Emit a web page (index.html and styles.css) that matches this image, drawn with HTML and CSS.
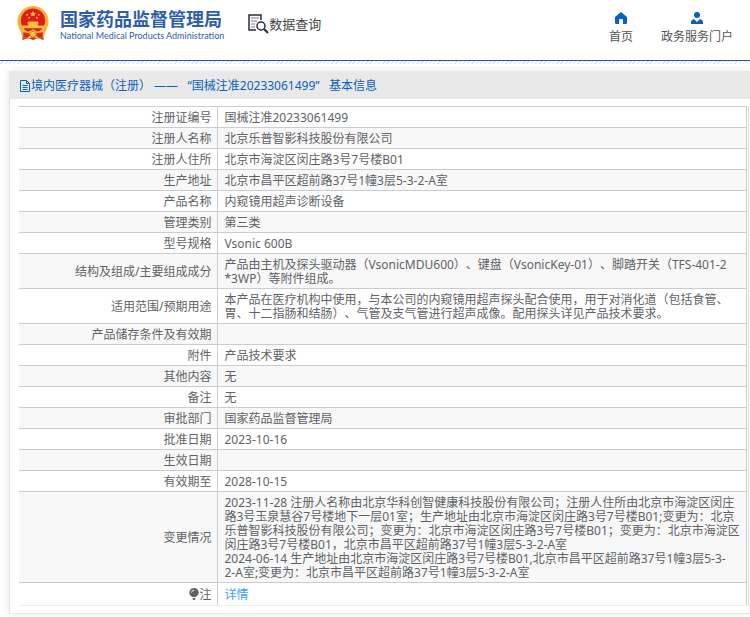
FILE: index.html
```html
<!DOCTYPE html>
<html lang="zh-CN">
<head>
    <meta charset="UTF-8">
    <meta name="viewport" content="width=device-width, initial-scale=1.0">
    <title>国家药品监督管理局 数据查询</title>
    <link rel="stylesheet" href="styles.css">
</head>
<body>

    <!-- header -->
    <header class="header">
        <a class="logo" href="#">
            <svg class="emblem" viewBox="0 0 34 36" aria-hidden="true">
                <path d="M7 26 L6 35 L12 33 L17 35 L22 33 L28 35 L27 26 Z" fill="#d8231f"/>
                <circle cx="17" cy="16" r="16" fill="#f0b93a"/>
                <circle cx="17" cy="16" r="14" fill="none" stroke="#e9a930" stroke-width="1" stroke-dasharray="2 1"/>
                <circle cx="17" cy="15" r="12.5" fill="#e01b1b"/>
                <path d="M17 5l.9 2.200h2.300l-1.900 1.400.8 2.300-2.100-1.400-2.100 1.400.8-2.300-1.900-1.400h2.300z" fill="#f8d548"/>
                <g fill="#f8c040">
                    <circle cx="11" cy="9" r="1"/><circle cx="13" cy="12" r="1"/>
                    <circle cx="21" cy="12" r="1"/><circle cx="23" cy="9" r="1"/>
                    <path d="M12 16h10l1 2h-1v2h6v3H6v-3h6v-2h-1z"/>
                </g>
                <path d="M3 23c3 3 7 4 10 3l4-2 4 2c3 1 7 0 10-3l-3 9-6 2-5-2-5 2-6-2z" fill="#efb836"/>
                <path d="M7 27l6 1 1 2-3 3-4-1zM27 27l-6 1-1 2 3 3 4-1z" fill="#d8231f"/>
                <circle cx="17" cy="29" r="3" fill="#f5cb45" stroke="#c88420" stroke-width="1"/>
            </svg>
            <span class="logo-text">
                <strong>国家药品监督管理局</strong>
                <span class="logo-en">National Medical Products Administration</span>
            </span>
        </a>
        <a class="query" href="#">
            <svg width="21" height="20" viewBox="0 0 21 20" fill="none" stroke="#2b2b42" aria-hidden="true">
                <path d="M13 6V1H1v15h7" stroke-width="1.500"/>
                <path d="M3 4h8M3 7h6M3 10h4M3 13h4" stroke="#77778a" stroke-width="1"/>
                <circle cx="13" cy="12" r="4" stroke-width="1.500"/>
                <path d="M16 15l4 4" stroke-width="2.200"/>
            </svg>
            <span>数据查询</span>
        </a>
        <nav class="nav">
            <a href="#">
                <svg width="12" height="12" viewBox="0 0 12 12" aria-hidden="true">
                    <path d="M6 0l6 5v6q0 1-1 1H8V8q0-1-1-1H5Q4 7 4 8v4H1q-1 0-1-1V5z" fill="#0a5fc4"/>
                </svg>
                <span>首页</span>
            </a>
            <a href="#">
                <svg width="12" height="12" viewBox="0 0 12 12" aria-hidden="true">
                    <circle cx="6" cy="3" r="3" fill="#0a5fc4"/>
                    <path d="M0 12v-2q0-2 3-3l3 3 3-3q3 1 3 3v2z" fill="#0a5fc4"/>
                </svg>
                <span>政务服务门户</span>
            </a>
        </nav>
    </header>
    <div class="stripe"></div>

    <!-- detail card -->
    <main class="card">
        <h1 class="card-title">
            <svg width="12" height="12" viewBox="0 0 12 12" fill="none" stroke="#0a5fc4" aria-hidden="true">
                <path d="M1.500.5h6l3 3v8h-9zM7.500.5v3h3M3.500 5.500h5M3.500 7.500h5M3.500 9.500h5"/>
            </svg>
            <span>境内医疗器械（注册） ——&nbsp;&nbsp; “国械注准20233061499”&nbsp;&nbsp; 基本信息</span>
        </h1>
        <div class="card-body">
            <table class="info">
                <tr><th scope="row">注册证编号</th><td>国械注准20233061499</td></tr>
                <tr><th scope="row">注册人名称</th><td>北京乐普智影科技股份有限公司</td></tr>
                <tr><th scope="row">注册人住所</th><td>北京市海淀区闵庄路3号7号楼B01</td></tr>
                <tr><th scope="row">生产地址</th><td>北京市昌平区超前路37号1幢3层5-3-2-A室</td></tr>
                <tr><th scope="row">产品名称</th><td>内窥镜用超声诊断设备</td></tr>
                <tr><th scope="row">管理类别</th><td>第三类</td></tr>
                <tr><th scope="row">型号规格</th><td>Vsonic 600B</td></tr>
                <tr><th scope="row">结构及组成/主要组成成分</th><td>产品由主机及探头驱动器（VsonicMDU600）、键盘（VsonicKey-01）、脚踏开关（TFS-401-2<br>*3WP）等附件组成。</td></tr>
                <tr><th scope="row">适用范围/预期用途</th><td>本产品在医疗机构中使用，与本公司的内窥镜用超声探头配合使用，用于对消化道（包括食管、<br>胃、十二指肠和结肠）、气管及支气管进行超声成像。配用探头详见产品技术要求。</td></tr>
                <tr><th scope="row">产品储存条件及有效期</th><td></td></tr>
                <tr><th scope="row">附件</th><td>产品技术要求</td></tr>
                <tr><th scope="row">其他内容</th><td>无</td></tr>
                <tr><th scope="row">备注</th><td>无</td></tr>
                <tr><th scope="row">审批部门</th><td>国家药品监督管理局</td></tr>
                <tr><th scope="row">批准日期</th><td>2023-10-16</td></tr>
                <tr><th scope="row">生效日期</th><td></td></tr>
                <tr><th scope="row">有效期至</th><td>2028-10-15</td></tr>
                <tr><th scope="row">变更情况</th><td>2023-11-28 注册人名称由北京华科创智健康科技股份有限公司；注册人住所由北京市海淀区闵庄<br>路3号玉泉慧谷7号楼地下一层01室；生产地址由北京市海淀区闵庄路3号7号楼B01;变更为：北京<br>乐普智影科技股份有限公司；变更为：北京市海淀区闵庄路3号7号楼B01；变更为：北京市海淀区<br>闵庄路3号7号楼B01，北京市昌平区超前路37号1幢3层5-3-2-A室<br>2024-06-14 生产地址由北京市海淀区闵庄路3号7号楼B01,北京市昌平区超前路37号1幢3层5-3-<br>2-A室;变更为：北京市昌平区超前路37号1幢3层5-3-2-A室</td></tr>
                <tr class="note">
                    <th scope="row">
                        <svg width="10" height="12" viewBox="0 0 10 12" aria-hidden="true">
                            <path d="M5 0a4.500 4.500 0 0 1 3 8L6.500 9h-3L2 8A4.500 4.500 0 0 1 5 0zM3.500 10h3v1l-1 1h-1l-1-1z" fill="#606266"/>
                            <path d="M2.500 4.500Q3 2.500 5 2" fill="none" stroke="#fff"/>
                        </svg>注
                    </th>
                    <td><a href="#">详情</a></td>
                </tr>
            </table>
        </div>
    </main>

</body>
</html>
```
FILE: styles.css
```css
* {
    margin: 0;
    padding: 0;
    box-sizing: border-box;
}

body {
    background-color: #fff;
    color: #606266;
    font-family: "Noto Sans", "Noto Sans CJK SC", sans-serif;
    font-size: 12px;
    line-height: 14px;
    text-spacing-trim: space-all;
}

a {
    color: #409eff;
    text-decoration: none;
}

/* header */
.header {
    display: flex;
    align-items: flex-start;
    height: 61px;
    padding: 6px 17px 0 16px;
    border-bottom: 1px solid #0a5fc4;
}

.logo {
    display: flex;
    gap: 10px;
    color: #2e5db0;
}

.emblem {
    width: 34px;
    height: 35px;
}

.logo-text {
    display: flex;
    flex-direction: column;
    padding-top: 2px;
    white-space: nowrap;
}

.logo-text strong {
    font-family: "Noto Sans CJK SC", sans-serif;
    font-size: 18px;
    line-height: 20px;
}

.logo-en {
    font-family: Lato, sans-serif;
    font-size: 9px;
    line-height: 16px;
}

.query {
    display: flex;
    align-items: center;
    margin: 8px 0 0 24px;
    color: #444;
    font-size: 13px;
    line-height: 20px;
    white-space: nowrap;
}

.nav {
    display: flex;
    gap: 28px;
    margin-left: auto;
    padding-top: 6px;
}

.nav a {
    display: flex;
    flex-direction: column;
    align-items: center;
    gap: 6px;
    color: #555;
    white-space: nowrap;
}

.stripe {
    height: 3px;
    background: repeating-linear-gradient(135deg, #fff 0, #fff 2px, #e4e4e4 2px, #e4e4e4 3px);
}

/* card */
.card {
    margin: 7px 0 4px 9px;
    border-left: 1px solid #e6e6e6;
    border-bottom: 1px solid #e6e6e6;
    box-shadow: 0 0 8px rgba(0, 0, 0, 0.1);
}

.card-title {
    display: flex;
    align-items: center;
    height: 28px;
    padding: 2px 9px 0;
    background-color: #e9e9e9;
    color: #0a5fc4;
    font-size: 12px;
    font-weight: normal;
    white-space: nowrap;
}

.card-body {
    margin: 7px 1px 7px 9px;
    padding-right: 1px;
    border-right: 1px solid #dcdfe6;
}

/* table */
.info {
    width: 100%;
    border-collapse: collapse;
    border-top: 1px solid #ccc;
    border-right: 1px solid #ccc;
}

.info th,
.info td {
    padding: 4px 0 2px 7px;
    height: 21px;
    border-bottom: 1px solid #ccc;
    font-weight: normal;
}

.info th {
    width: 198px;
    padding-right: 5px;
    border-right: 1px solid #ccc;
    text-align: right;
}

.info td {
    text-align: left;
}

.info tr:nth-child(even) {
    background-color: #f8f8f8;
}

.info .note {
    background-color: #fff;
}

.info .note th,
.info .note td {
    height: 23px;
    border-bottom-color: #ebeef5;
}

.note svg {
    vertical-align: -1px;
}
```
